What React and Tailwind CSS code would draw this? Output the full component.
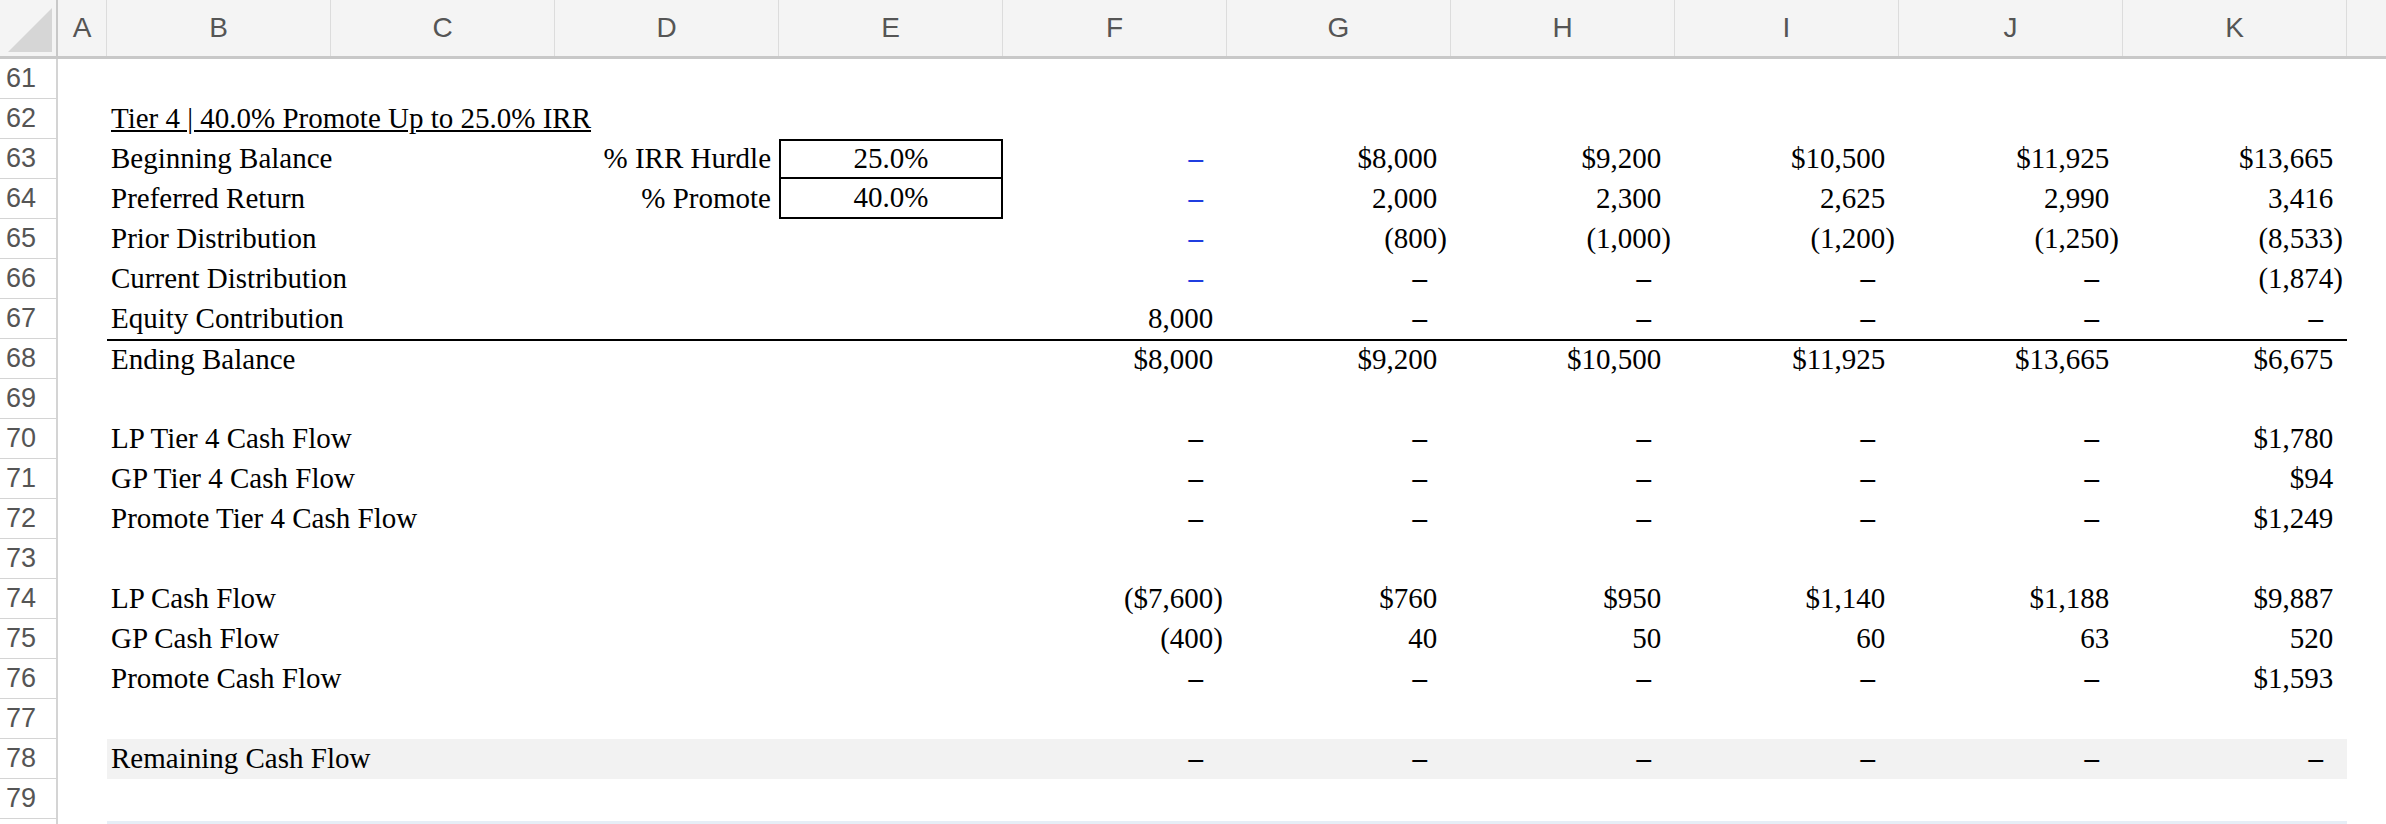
const COLS = ["A", "B", "C", "D", "E", "F", "G", "H", "I", "J", "K"];
const W = ["w-[49px]", ...Array(10).fill("w-[224px]")];

const D = "dash";
const rows = [
  { n: 61 },
  { n: 62, title: "Tier 4 | 40.0% Promote Up to 25.0% IRR" },
  { n: 63, label: "Beginning Balance", d: "% IRR Hurdle", e: "25.0%", vals: ["blue", "$8,000", "$9,200", "$10,500", "$11,925", "$13,665"] },
  { n: 64, label: "Preferred Return", d: "% Promote", e: "40.0%", vals: ["blue", "2,000", "2,300", "2,625", "2,990", "3,416"] },
  { n: 65, label: "Prior Distribution", vals: ["blue", "(800)", "(1,000)", "(1,200)", "(1,250)", "(8,533)"] },
  { n: 66, label: "Current Distribution", vals: ["blue", D, D, D, D, "(1,874)"] },
  { n: 67, label: "Equity Contribution", vals: ["8,000", D, D, D, D, D] },
  { n: 68, label: "Ending Balance", top: true, vals: ["$8,000", "$9,200", "$10,500", "$11,925", "$13,665", "$6,675"] },
  { n: 69 },
  { n: 70, label: "LP Tier 4 Cash Flow", vals: [D, D, D, D, D, "$1,780"] },
  { n: 71, label: "GP Tier 4 Cash Flow", vals: [D, D, D, D, D, "$94"] },
  { n: 72, label: "Promote Tier 4 Cash Flow", vals: [D, D, D, D, D, "$1,249"] },
  { n: 73 },
  { n: 74, label: "LP Cash Flow", vals: ["($7,600)", "$760", "$950", "$1,140", "$1,188", "$9,887"] },
  { n: 75, label: "GP Cash Flow", vals: ["(400)", "40", "50", "60", "63", "520"] },
  { n: 76, label: "Promote Cash Flow", vals: [D, D, D, D, D, "$1,593"] },
  { n: 77 },
  { n: 78, label: "Remaining Cash Flow", shade: true, vals: [D, D, D, D, D, D] },
  { n: 79 },
];

function Num({ v }) {
  if (v === D || v === "blue")
    return (
      <div className={`w-[224px] text-right pr-[24px] font-bold ${v === "blue" ? "text-[#1f3ee0]" : ""}`}>–</div>
    );
  const paren = v.endsWith(")");
  return (
    <div className="w-[224px] text-right pr-[4px]">
      {v}
      <span className={paren ? "hidden" : "invisible"}>)</span>
    </div>
  );
}

export default function App() {
  return (
    <div className="w-[2386px] h-[824px] overflow-hidden bg-white text-[29px] text-black" style={{ fontFamily: '"Liberation Serif", serif' }}>
      <div className="flex h-[59px] bg-[#f4f4f4] border-b-[3px] border-[#c8c8c8] text-[#555] text-[28px]" style={{ fontFamily: '"Liberation Sans", sans-serif' }}>
        <div className="w-[58px] relative border-r-2 border-[#c8c8c8]">
          <svg className="absolute right-1 bottom-1" width="44" height="44"><polygon points="44,0 44,44 0,44" fill="#d6d6d6" /></svg>
        </div>
        {COLS.map((c, i) => (
          <div key={c} className={`${W[i]} flex items-center justify-center border-r border-[#dcdcdc]`}>{c}</div>
        ))}
        <div className="flex-1" />
      </div>
      {rows.map((r) => (
        <div key={r.n} className="flex h-[40px]">
          <div className="w-[58px] shrink-0 flex items-center pl-[6px] border-r-2 border-b border-[#d4d4d4] text-[#555] text-[27px]" style={{ fontFamily: '"Liberation Sans", sans-serif' }}>{r.n}</div>
          <div className="w-[49px] shrink-0" />
          <div className={`flex items-center ${r.shade ? "bg-[#f2f2f2]" : ""} ${r.top ? "border-t-2 border-black" : ""}`}>
            <div className="w-[448px] pl-[4px] whitespace-nowrap">
              {r.title ? <span className="underline">{r.title}</span> : r.label}
            </div>
            <div className="w-[224px] text-right pr-[8px] whitespace-nowrap">{r.d}</div>
            <div className={`w-[224px] h-[40px] flex items-center justify-center ${r.e ? "border-2 border-black" : ""} ${r.n === 64 ? "border-t-0" : ""}`}>{r.e}</div>
            {r.vals ? r.vals.map((v, i) => <Num key={i} v={v} />) : <div className="w-[1344px]" />}
          </div>
        </div>
      ))}
      <div className="flex h-[10px]">
        <div className="w-[58px] border-r-2 border-[#d4d4d4]" />
        <div className="w-[49px]" />
        <div className="w-[2240px] mt-[2px] bg-[#e6eef6]" />
      </div>
    </div>
  );
}
